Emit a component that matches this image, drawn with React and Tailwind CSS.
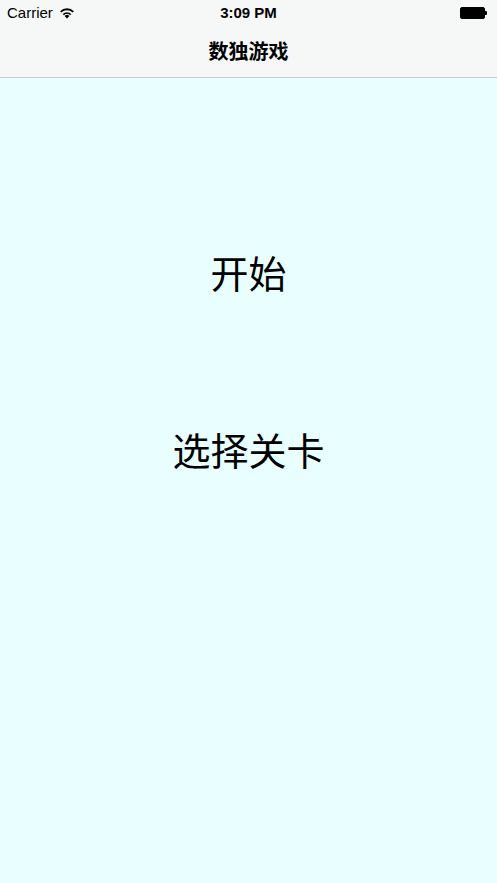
import React from "react";

function Wifi() {
  return (
    <svg width="16" height="12" viewBox="0 0 16 12" className="ml-[6px]">
      <path d="M8 11.5 L5.6 8.9 A3.4 3.4 0 0 1 10.4 8.9 Z" fill="#000" />
      <path d="M3.7 6.9 A6.2 6.2 0 0 1 12.3 6.9 L11.1 8.2 A4.5 4.5 0 0 0 4.9 8.2 Z" fill="#000" />
      <path d="M1.1 4.2 A9.8 9.8 0 0 1 14.9 4.2 L13.6 5.6 A7.9 7.9 0 0 0 2.4 5.6 Z" fill="#000" />
    </svg>
  );
}

function Battery() {
  return (
    <div className="flex items-center">
      <div className="w-[25px] h-[12px] rounded-[2px] border border-black bg-black" />
      <div className="w-[2px] h-[4px] bg-black rounded-r-[1px]" />
    </div>
  );
}

export default function App() {
  const font = { fontFamily: '"Noto Sans CJK SC", "Liberation Sans", sans-serif' };
  return (
    <div className="w-[497px] h-[883px] flex flex-col bg-[#e9ffff]" style={font}>
      {/* Nav bar with status bar */}
      <div className="h-[78px] bg-[#f6f8f8] border-b border-[#c8cccc] flex flex-col">
        <div className="h-[26px] flex items-center justify-between px-[7px] relative">
          <div className="flex items-center text-[15px] text-black" style={{ fontFamily: '"Liberation Sans", sans-serif' }}>
            Carrier
            <Wifi />
          </div>
          <div className="absolute left-0 right-0 top-0 h-[26px] flex items-center justify-center text-[15px] font-bold text-black" style={{ fontFamily: '"Liberation Sans", sans-serif' }}>
            3:09 PM
          </div>
          <div className="pr-[3px]">
            <Battery />
          </div>
        </div>
        <div className="flex-1 flex items-center justify-center text-[20px] font-semibold text-black pb-[2px]">
          数独游戏
        </div>
      </div>

      {/* Menu */}
      <div className="flex flex-col items-center text-black">
        <button className="mt-[167px] h-[54px] text-[38px] leading-[54px]">开始</button>
        <button className="mt-[123px] h-[54px] text-[38px] leading-[54px]">选择关卡</button>
      </div>
    </div>
  );
}
